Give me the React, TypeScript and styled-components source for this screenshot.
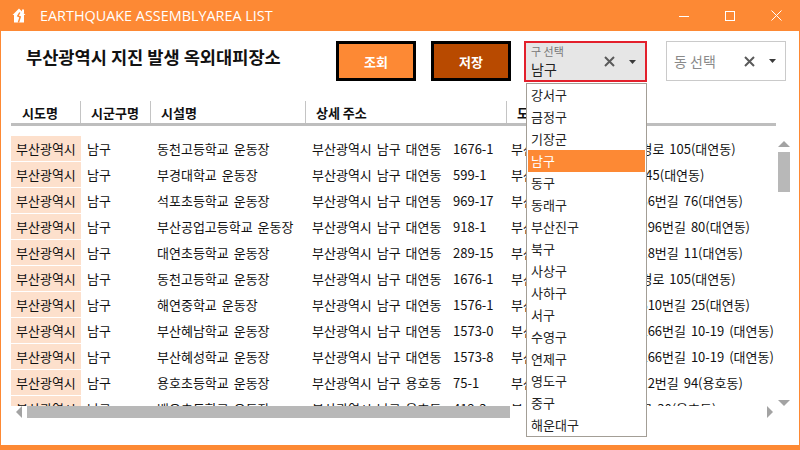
import React from "react";
import styled, { createGlobalStyle } from "styled-components";

const ORANGE = "#FD8934";
const KR = `"Noto Sans CJK KR", "Noto Sans", sans-serif`;

const Global = createGlobalStyle`
  html, body { margin: 0; padding: 0; background: #fff; }
  body { font-family: ${KR}; }
  * { box-sizing: border-box; }
`;

const Window = styled.div`
  width: 800px;
  height: 450px;
  display: flex;
  flex-direction: column;
  background: #fff;
  border-left: 1px solid ${ORANGE};
  border-right: 1px solid ${ORANGE};
  border-bottom: 5px solid ${ORANGE};
  overflow: hidden;
`;

const TitleBar = styled.div`
  height: 31px;
  flex: none;
  background: ${ORANGE};
  display: flex;
  align-items: center;
  padding-left: 11px;
  color: #fff;
`;

const TitleText = styled.div`
  font-family: "Open Sans", "Noto Sans", sans-serif;
  font-size: 14.4px;
  margin-left: 14px;
  flex: 1;
`;

const WinBtn = styled.div`
  width: 46px;
  height: 31px;
  display: flex;
  align-items: center;
  justify-content: center;
`;

const Content = styled.div`
  flex: 1;
  display: flex;
  flex-direction: column;
`;

const Toolbar = styled.div`
  display: flex;
  align-items: flex-start;
  padding: 10px 0 0 25px;
  height: 50px;
`;

const PageTitle = styled.h1`
  margin: 5px 0 0;
  width: 310px;
  font-size: 17.6px;
  line-height: 22px;
  font-weight: 700;
  color: #111;
  font-family: ${KR};
  white-space: nowrap;
`;

const ActionButton = styled.div<{ $dark?: boolean }>`
  width: 80px;
  height: 40px;
  margin-right: ${(p) => (p.$dark ? 13 : 15)}px;
  border: 3px solid #000;
  background: ${(p) => (p.$dark ? "#B84A00" : ORANGE)};
  color: #fff;
  font-weight: 700;
  font-size: 13px;
  display: flex;
  align-items: center;
  justify-content: center;
`;

const ComboWrap = styled.div<{ $w: number; $mr?: number }>`
  position: relative;
  width: ${(p) => p.$w}px;
  margin-right: ${(p) => p.$mr ?? 0}px;
`;

const Combo = styled.div<{ $active?: boolean }>`
  height: ${(p) => (p.$active ? 41 : 40)}px;
  border: ${(p) => (p.$active ? "2px solid #E3202C" : "1px solid #CACACA")};
  background: ${(p) => (p.$active ? "#E6E6E6" : "#fff")};
  display: flex;
  align-items: center;
  padding: 0 9px 0 ${(p) => (p.$active ? 5 : 7)}px;
`;

const ComboText = styled.div`
  flex: 1;
  display: flex;
  flex-direction: column;
  justify-content: center;
`;

const ComboLabel = styled.div`
  font-size: 11px;
  line-height: 12px;
  color: #777;
  margin-top: -1px;
`;

const ComboValue = styled.div<{ $placeholder?: boolean }>`
  font-size: 14px;
  line-height: 18px;
  color: ${(p) => (p.$placeholder ? "#8a8a8a" : "#222")};
  margin-top: ${(p) => (p.$placeholder ? 0 : 3)}px;
`;

const ClearIcon = styled.svg`
  width: 11px;
  height: 11px;
  margin-right: 14px;
  flex: none;
`;

const ArrowIcon = styled.svg`
  width: 7px;
  height: 4px;
  flex: none;
`;

const DropList = styled.div`
  position: absolute;
  top: calc(100% + 1px);
  left: 2px;
  width: 121px;
  border: 1px solid #A39E96;
  background: #fff;
  padding: 0 1px;
  z-index: 10;
`;

const DropItem = styled.div<{ $sel?: boolean }>`
  height: 22px;
  line-height: 22px;
  padding-left: 3px;
  font-size: 13px;
  color: ${(p) => (p.$sel ? "#fff" : "#222")};
  background: ${(p) => (p.$sel ? ORANGE : "transparent")};
`;

const TableArea = styled.div`
  margin: 20px 0 0 10px;
  width: 782px;
`;

const HeaderRow = styled.div`
  width: 765px;
  height: 25px;
  display: grid;
  grid-template-columns: 69px 70px 155px 201px 1fr;
  border-bottom: 3px solid #BEBEBE;
`;

const HeaderCell = styled.div<{ $first?: boolean }>`
  height: 22px;
  display: flex;
  align-items: center;
  padding-left: ${(p) => (p.$first ? 11 : 10)}px;
  border-left: ${(p) => (p.$first ? "none" : "1px solid #C4C4C4")};
  font-weight: 700;
  font-size: 13px;
  color: #111;
  white-space: nowrap;
  overflow: hidden;
`;

const BodyWrap = styled.div`
  margin-top: 10px;
  display: flex;
`;

const RowsViewport = styled.div`
  width: 765px;
  height: 270px;
  overflow: hidden;
`;

const Row = styled.div`
  height: 25px;
  margin-bottom: 1px;
  display: grid;
  grid-template-columns: 70px 70px 155px 201px 1fr;
  align-items: center;
  font-size: 13px;
  word-spacing: 2px;
  color: #111;
  white-space: nowrap;
`;

const Cell = styled.div<{ $peach?: boolean; $pad?: number }>`
  height: 25px;
  display: flex;
  align-items: center;
  padding-left: ${(p) => p.$pad ?? 6}px;
  background: ${(p) => (p.$peach ? "#FDE0CC" : "transparent")};
  overflow: hidden;
`;

const AddrPart = styled.span`
  width: 141px;
  flex: none;
`;

const VScroll = styled.div`
  width: 13px;
  margin-left: 1px;
  height: 270px;
  display: flex;
  flex-direction: column;
  align-items: center;
  padding-top: 5px;
`;

const VThumb = styled.div`
  width: 12px;
  height: 40px;
  margin-top: 5px;
  background: #B8B8B8;
`;

const Spacer = styled.div`
  flex: 1;
`;

const HScroll = styled.div`
  height: 12px;
  display: flex;
  align-items: center;
  padding-left: 5px;
  width: 762px;
  background: #fff;
  position: relative;
`;

const HThumb = styled.div`
  width: 483px;
  height: 12px;
  margin-left: 5px;
  background: #B8B8B8;
`;

const Tri = styled.svg`
  flex: none;
  display: block;
`;

const rows = [
  { fac: "동천고등학교 운동장", dong: "대연동", lot: "1676-1", road: "부산광역시 남구 유엔평경로 105(대연동)" },
  { fac: "부경대학교 운동장", dong: "대연동", lot: "599-1", road: "부산광역시 남구 용소로 45(대연동)" },
  { fac: "석포초등학교 운동장", dong: "대연동", lot: "969-17", road: "부산광역시 남구 석포로36번길 76(대연동)" },
  { fac: "부산공업고등학교 운동장", dong: "대연동", lot: "918-1", road: "부산광역시 남구 수영로196번길 80(대연동)" },
  { fac: "대연초등학교 운동장", dong: "대연동", lot: "289-15", road: "부산광역시 남구 대연로18번길 11(대연동)" },
  { fac: "동천고등학교 운동장", dong: "대연동", lot: "1676-1", road: "부산광역시 남구 유엔평경로 105(대연동)" },
  { fac: "해연중학교 운동장", dong: "대연동", lot: "1576-1", road: "부산광역시 남구 수영로310번길 25(대연동)" },
  { fac: "부산혜남학교 운동장", dong: "대연동", lot: "1573-0", road: "부산광역시 남구 수영로266번길 10-19 (대연동)" },
  { fac: "부산혜성학교 운동장", dong: "대연동", lot: "1573-8", road: "부산광역시 남구 수영로266번길 10-19 (대연동)" },
  { fac: "용호초등학교 운동장", dong: "용호동", lot: "75-1", road: "부산광역시 남구 용호로12번길 94(용호동)" },
  { fac: "백운초등학교 운동장", dong: "용호동", lot: "412-3", road: "부산광역시 남구 백운포로 30(용호동)" },
];

const gus = ["강서구", "금정구", "기장군", "남구", "동구", "동래구", "부산진구", "북구", "사상구", "사하구", "서구", "수영구", "연제구", "영도구", "중구", "해운대구"];

const X = () => (
  <ClearIcon viewBox="0 0 11 11">
    <path d="M1 1 L10 10 M10 1 L1 10" stroke="#5a5a5a" strokeWidth="2" />
  </ClearIcon>
);

const Caret = () => (
  <ArrowIcon viewBox="0 0 7 4">
    <path d="M0 0 H7 L3.5 4 Z" fill="#3a3a3a" />
  </ArrowIcon>
);

export default function App() {
  return (
    <>
      <Global />
      <Window>
        <TitleBar>
          <svg width="14" height="15" viewBox="0 0 14 15">
            <path d="M7 0.5 L13.5 7 H12 V14.5 H2 V7 H0.5 Z" fill="#fff" />
            <rect x="10" y="1.5" width="2" height="3.5" fill="#fff" />
            <path d="M7.8 4.5 L5.8 8 L8.2 9 L6.4 14.5" stroke={ORANGE} strokeWidth="1.5" fill="none" />
          </svg>
          <TitleText>EARTHQUAKE ASSEMBLYAREA LIST</TitleText>
          <WinBtn>
            <svg width="10" height="10" viewBox="0 0 10 10">
              <path d="M0 5.5 H10" stroke="#fff" strokeWidth="1" />
            </svg>
          </WinBtn>
          <WinBtn>
            <svg width="10" height="10" viewBox="0 0 10 10">
              <rect x="0.5" y="0.5" width="9" height="9" stroke="#fff" fill="none" />
            </svg>
          </WinBtn>
          <WinBtn>
            <svg width="11" height="11" viewBox="0 0 11 11">
              <path d="M0.5 0.5 L10.5 10.5 M10.5 0.5 L0.5 10.5" stroke="#fff" strokeWidth="1" />
            </svg>
          </WinBtn>
        </TitleBar>
        <Content>
          <Toolbar>
            <PageTitle>부산광역시 지진 발생 옥외대피장소</PageTitle>
            <ActionButton>조회</ActionButton>
            <ActionButton $dark>저장</ActionButton>
            <ComboWrap $w={123} $mr={19}>
              <Combo $active>
                <ComboText>
                  <ComboLabel>구 선택</ComboLabel>
                  <ComboValue>남구</ComboValue>
                </ComboText>
                <X />
                <Caret />
              </Combo>
              <DropList>
                {gus.map((g) => (
                  <DropItem key={g} $sel={g === "남구"}>
                    {g}
                  </DropItem>
                ))}
              </DropList>
            </ComboWrap>
            <ComboWrap $w={120}>
              <Combo>
                <ComboText>
                  <ComboValue $placeholder>동 선택</ComboValue>
                </ComboText>
                <X />
                <Caret />
              </Combo>
            </ComboWrap>
          </Toolbar>
          <TableArea>
            <HeaderRow>
              <HeaderCell $first>시도명</HeaderCell>
              <HeaderCell>시군구명</HeaderCell>
              <HeaderCell>시설명</HeaderCell>
              <HeaderCell>상세 주소</HeaderCell>
              <HeaderCell>도로명 주소</HeaderCell>
            </HeaderRow>
            <BodyWrap>
              <RowsViewport>
                {rows.map((r, i) => (
                  <Row key={i}>
                    <Cell $peach $pad={5}>부산광역시</Cell>
                    <Cell>남구</Cell>
                    <Cell>{r.fac}</Cell>
                    <Cell>
                      <AddrPart>부산광역시 남구 {r.dong}</AddrPart>
                      {r.lot}
                    </Cell>
                    <Cell $pad={4}>{r.road}</Cell>
                  </Row>
                ))}
              </RowsViewport>
              <VScroll>
                <Tri width="12" height="6" viewBox="0 0 12 6">
                  <path d="M0 6 L6 0 L12 6 Z" fill="#A3A3A3" />
                </Tri>
                <VThumb />
                <Spacer />
                <Tri width="12" height="6" viewBox="0 0 12 6">
                  <path d="M0 0 L12 0 L6 6 Z" fill="#A3A3A3" />
                </Tri>
              </VScroll>
            </BodyWrap>
            <HScroll>
              <Tri width="6" height="12" viewBox="0 0 6 12">
                <path d="M6 0 L6 12 L0 6 Z" fill="#A3A3A3" />
              </Tri>
              <HThumb />
              <Spacer />
              <Tri width="6" height="12" viewBox="0 0 6 12">
                <path d="M0 0 L6 6 L0 12 Z" fill="#A3A3A3" />
              </Tri>
            </HScroll>
          </TableArea>
        </Content>
      </Window>
    </>
  );
}
